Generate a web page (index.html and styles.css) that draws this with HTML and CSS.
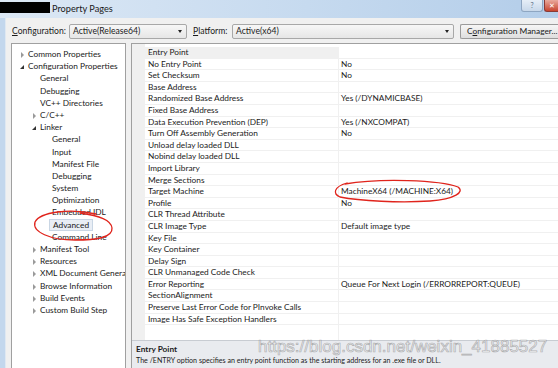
FILE: index.html
```html
<!DOCTYPE html>
<html lang="en">
<head>
    <meta charset="UTF-8">
    <title>Property Pages</title>
    <link rel="stylesheet" href="styles.css">
</head>
<body>
    <div class="window">
        <div class="titlebar">
            <span class="redact"></span>
            <span class="title">Property Pages</span>
            <div class="caption-buttons">
                <span class="cap-help">?</span>
                <span class="cap-close">✕</span>
            </div>
        </div>
        <div class="frame">
            <div class="dialog">
                <div class="config-row">
                    <label class="lbl lbl-config"><u>C</u>onfiguration:</label>
                    <div class="combo combo-config"><span>Active(Release64)</span><span class="arrow"></span></div>
                    <label class="lbl lbl-platform"><u>P</u>latform:</label>
                    <div class="combo combo-platform"><span>Active(x64)</span><span class="arrow"></span></div>
                    <div class="btn">C<u>o</u>nfiguration Manager...</div>
                </div>
                <div class="main">
                    <div class="tree">
                        <div class="node l0 collapsed">Common Properties</div>
                        <div class="node l0 expanded">Configuration Properties</div>
                        <div class="node l1">General</div>
                        <div class="node l1">Debugging</div>
                        <div class="node l1">VC++ Directories</div>
                        <div class="node l1 collapsed">C/C++</div>
                        <div class="node l1 expanded">Linker</div>
                        <div class="node l2">General</div>
                        <div class="node l2">Input</div>
                        <div class="node l2">Manifest File</div>
                        <div class="node l2">Debugging</div>
                        <div class="node l2">System</div>
                        <div class="node l2">Optimization</div>
                        <div class="node l2">Embedded IDL</div>
                        <div class="node l2"><span class="selected">Advanced</span></div>
                        <div class="node l2">Command Line</div>
                        <div class="node l1 collapsed">Manifest Tool</div>
                        <div class="node l1 collapsed">Resources</div>
                        <div class="node l1 collapsed">XML Document Generator</div>
                        <div class="node l1 collapsed">Browse Information</div>
                        <div class="node l1 collapsed">Build Events</div>
                        <div class="node l1 collapsed">Custom Build Step</div>
                    </div>
                    <div class="grid-panel">
                        <div class="grid">
                            <div class="gutter"></div>
                            <div class="rows">
                                <div class="row current"><div class="name">Entry Point</div><div class="value"></div></div>
                                <div class="row"><div class="name">No Entry Point</div><div class="value">No</div></div>
                                <div class="row"><div class="name">Set Checksum</div><div class="value">No</div></div>
                                <div class="row"><div class="name">Base Address</div><div class="value"></div></div>
                                <div class="row"><div class="name">Randomized Base Address</div><div class="value">Yes (/DYNAMICBASE)</div></div>
                                <div class="row"><div class="name">Fixed Base Address</div><div class="value"></div></div>
                                <div class="row"><div class="name">Data Execution Prevention (DEP)</div><div class="value">Yes (/NXCOMPAT)</div></div>
                                <div class="row"><div class="name">Turn Off Assembly Generation</div><div class="value">No</div></div>
                                <div class="row"><div class="name">Unload delay loaded DLL</div><div class="value"></div></div>
                                <div class="row"><div class="name">Nobind delay loaded DLL</div><div class="value"></div></div>
                                <div class="row"><div class="name">Import Library</div><div class="value"></div></div>
                                <div class="row"><div class="name">Merge Sections</div><div class="value"></div></div>
                                <div class="row"><div class="name">Target Machine</div><div class="value">MachineX64 (/MACHINE:X64)</div></div>
                                <div class="row"><div class="name">Profile</div><div class="value">No</div></div>
                                <div class="row"><div class="name">CLR Thread Attribute</div><div class="value"></div></div>
                                <div class="row"><div class="name">CLR Image Type</div><div class="value">Default image type</div></div>
                                <div class="row"><div class="name">Key File</div><div class="value"></div></div>
                                <div class="row"><div class="name">Key Container</div><div class="value"></div></div>
                                <div class="row"><div class="name">Delay Sign</div><div class="value"></div></div>
                                <div class="row"><div class="name">CLR Unmanaged Code Check</div><div class="value"></div></div>
                                <div class="row"><div class="name">Error Reporting</div><div class="value">Queue For Next Login (/ERRORREPORT:QUEUE)</div></div>
                                <div class="row"><div class="name">SectionAlignment</div><div class="value"></div></div>
                                <div class="row"><div class="name">Preserve Last Error Code for PInvoke Calls</div><div class="value"></div></div>
                                <div class="row"><div class="name">Image Has Safe Exception Handlers</div><div class="value"></div></div>
                                <div class="filler"><div class="name"></div><div class="value"></div></div>
                            </div>
                        </div>
                        <div class="description">
                            <div class="desc-title">Entry Point</div>
                            <div class="desc-text">The /ENTRY option specifies an entry point function as the starting address for an .exe file or DLL.</div>
                        </div>
                    </div>
                </div>
            </div>
        </div>
    </div>

    <div class="watermark">https://blog.csdn.net/weixin_41885527</div>

    <svg class="marks" width="558" height="368" viewBox="0 0 558 368">
        <path d="M96 214 C70 208, 40 212, 35 222 C32 232, 50 240, 75 240 C95 240, 113 238, 112 228 C111 220, 100 216, 80 213" />
        <path d="M345 184 C380 178, 440 180, 458 187 C465 192, 455 199, 430 201 C400 203, 360 201, 340 197 C333 194, 333 187, 347 183" />
    </svg>
</body>
</html>
```

FILE: styles.css
```css
body {
    margin: 0;
    width: 558px;
    height: 368px;
    overflow: hidden;
    position: relative;
    font-family: Lato, "Noto Sans", sans-serif;
    font-size: 8.3px;
    color: #1b1b1b;
    background: #f0f0f0;
}
.window {
    display: flex;
    flex-direction: column;
    height: 100%;
}
.titlebar {
    height: 18px;
    flex: none;
    display: flex;
    align-items: center;
    background: linear-gradient(to right, #dce8f5, #c6daef 55%, #b3cde9);
}
.redact {
    width: 50px;
    height: 11px;
    margin-top: -3px;
    background: #000;
}
.title {
    margin-left: 2px;
    margin-top: -2px;
    font-size: 9.2px;
    color: #1a1a1a;
}
.caption-buttons {
    margin-left: auto;
    align-self: flex-start;
    display: flex;
}
.cap-help {
    width: 20px;
    height: 11px;
    border: 1px solid #8ea6c2;
    border-top: none;
    border-radius: 0 0 3px 3px;
    background: linear-gradient(#e6eef7, #c8d8ea);
    color: #5d6f86;
    font-size: 7px;
    text-align: center;
    line-height: 11px;
}
.cap-close {
    width: 13px;
    height: 11px;
    margin-left: 1px;
    border: 1px solid #8b3a35;
    border-top: none;
    border-right: none;
    border-radius: 0 0 0 3px;
    background: linear-gradient(#e9a99c, #c8452f);
    color: #fff;
    font-size: 7px;
    line-height: 11px;
    text-align: center;
}
.frame {
    flex: 1;
    display: flex;
    border-left: 5px solid #c3d7ed;
    background: #dfe8f2;
}
.dialog {
    flex: 1;
    margin-left: 1px;
    background: #f0f0f0;
    display: flex;
    flex-direction: column;
}
.config-row {
    height: 25px;
    display: flex;
    align-items: center;
    padding-left: 6px;
    padding-top: 1px;
    box-sizing: border-box;
    font-size: 8.6px;
}
.lbl u, .btn u {
    text-decoration-thickness: 1px;
    text-underline-offset: 1px;
}
.lbl-config {
    width: 57px;
}
.lbl-platform {
    width: 39px;
    margin-left: 6px;
}
.combo {
    height: 15px;
    box-sizing: border-box;
    border: 1px solid #a8a8a8;
    border-radius: 2px;
    background: linear-gradient(#f7f7f7, #e6e6e6);
    display: flex;
    align-items: center;
    padding-left: 3px;
}
.combo-config {
    width: 118px;
}
.combo-platform {
    width: 222px;
}
.arrow {
    margin-left: auto;
    margin-right: 4px;
    border-left: 2.5px solid transparent;
    border-right: 2.5px solid transparent;
    border-top: 3px solid #222;
}
.btn {
    margin-left: 6px;
    height: 15px;
    width: 98px;
    flex: none;
    box-sizing: border-box;
    border: 1px solid #9a9a9a;
    border-right: none;
    border-radius: 2px 0 0 2px;
    background: linear-gradient(#f6f6f6, #dedede);
    padding-left: 6px;
    line-height: 13px;
    white-space: nowrap;
    font-size: 8.4px;
}
.main {
    flex: 1;
    display: flex;
    gap: 5px;
    padding-left: 5px;
    min-height: 0;
}
.tree {
    width: 115px;
    flex: none;
    box-sizing: border-box;
    border: 1px solid #a0a0a0;
    border-bottom: none;
    background: #fff;
    padding-top: 4px;
    overflow: hidden;
}
.node {
    height: 12.2px;
    line-height: 12.2px;
    white-space: nowrap;
    position: relative;
}
.l0 { padding-left: 16px; }
.l1 { padding-left: 28px; }
.l2 { padding-left: 40px; }
.collapsed::before,
.expanded::before {
    content: "";
    position: absolute;
    top: 4px;
}
.collapsed::before {
    margin-left: -7px;
    border-left: 3.5px solid #9a9a9a;
    border-top: 3px solid transparent;
    border-bottom: 3px solid transparent;
    width: 0;
    height: 0;
}
.expanded::before {
    margin-left: -8px;
    top: 4.5px;
    border-right: 4px solid #333;
    border-top: 4px solid transparent;
}
.selected {
    margin-left: -3px;
    padding: 0 3px;
    border: 1px solid #c9d6e4;
    background: #e9eef5;
}
.grid-panel {
    flex: 1;
    display: flex;
    flex-direction: column;
    border-top: 1px solid #a0a0a0;
    border-left: 1px solid #a0a0a0;
    background: #fff;
    min-width: 0;
}
.grid {
    flex: 1;
    display: flex;
}
.gutter {
    width: 13px;
    flex: none;
    background: #f0f0f0;
}
.rows {
    flex: 1;
    display: flex;
    flex-direction: column;
    padding-top: 3px;
}
.row, .filler {
    display: flex;
    height: 11.6px;
    line-height: 11.6px;
    white-space: nowrap;
}
.filler {
    flex: 1;
}
.name {
    width: 194px;
    flex: none;
    box-sizing: border-box;
    padding-left: 3px;
    border-bottom: 1px solid #f0f0f0;
    border-right: 1px solid #f0f0f0;
}
.value {
    flex: 1;
    padding-left: 2px;
    border-bottom: 1px solid #f0f0f0;
}
.filler .name, .filler .value {
    border-bottom: none;
}
.row.current .name {
    background: #f0f0f0;
}
.description {
    height: 28px;
    flex: none;
    border-top: 1px solid #c8ccd2;
    background: #e9ebef;
    padding: 3px 4px 0;
    box-sizing: border-box;
}
.desc-title {
    font-weight: bold;
    line-height: 11px;
}
.desc-text {
    line-height: 11px;
    font-size: 7.1px;
    white-space: nowrap;
}
.watermark {
    position: absolute;
    left: 258px;
    top: 337px;
    font-family: "Liberation Sans", Arial, sans-serif;
    font-size: 17px;
    color: rgba(255, 255, 255, 0.45);
    -webkit-text-stroke: 0.7px rgba(130, 130, 130, 0.6);
    white-space: nowrap;
}
.marks {
    position: absolute;
    left: 0;
    top: 0;
    pointer-events: none;
}
.marks path {
    fill: none;
    stroke: #e0241c;
    stroke-width: 1.3;
    stroke-linecap: round;
}
```
